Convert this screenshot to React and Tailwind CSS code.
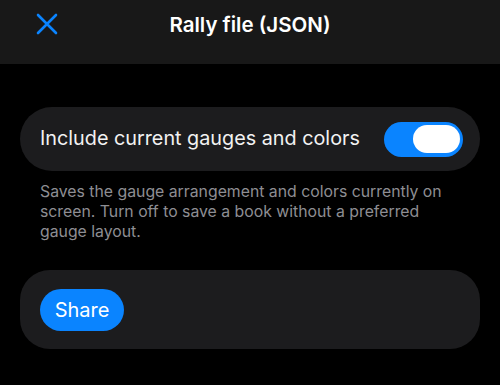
import React from "react";

export default function App() {
  return (
    <div className="w-[500px] h-[385px] bg-black text-white overflow-hidden" style={{ fontFamily: "Inter, 'Noto Sans', sans-serif" }}>
      <div className="h-16 bg-[#181818] relative flex items-center justify-center">
        <button className="absolute left-[36px] top-[13px] w-[22px] h-[22px] flex items-center justify-center">
          <svg width="22" height="22" viewBox="0 0 22 22" fill="none">
            <path d="M2 2L20 20M20 2L2 20" stroke="#0a84ff" strokeWidth="2.6" strokeLinecap="round" />
          </svg>
        </button>
        <div className="text-[20.5px] font-semibold -mt-[14px]">Rally file (JSON)</div>
      </div>

      <div className="px-5 pt-[43px]">
        <div className="h-16 rounded-full bg-[#1c1c1e] flex items-center justify-between pl-5 pr-[17px]">
          <span className="text-[19.8px] text-[#f2f2f2]">Include current gauges and colors</span>
          <div className="w-[79px] h-[35px] rounded-full bg-[#0a84ff] flex items-center justify-end pr-[3px]">
            <div className="w-[47px] h-[28px] rounded-full bg-white" />
          </div>
        </div>
        <p className="px-5 pt-[11px] text-[15.8px] leading-[20px] text-[#8e8e93]">
          Saves the gauge arrangement and colors currently on screen. Turn off to save a book without a preferred gauge layout.
        </p>
        <div className="mt-[28px] h-[79px] rounded-[30px] bg-[#1c1c1e] flex items-center px-5">
          <button className="h-[42px] w-[84px] rounded-full bg-[#0a84ff] text-white text-[20px] flex items-center justify-center">
            Share
          </button>
        </div>
      </div>
    </div>
  );
}
